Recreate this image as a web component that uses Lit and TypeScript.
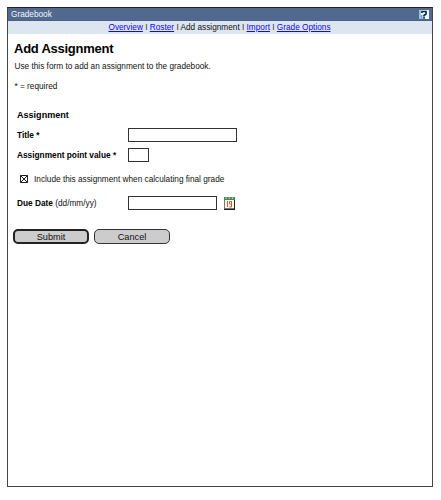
import { LitElement, html, css, svg } from "lit";
import { customElement } from "lit/decorators.js";

@customElement("app-root")
class AppRoot extends LitElement {
  static styles = css`
    * { box-sizing: border-box; }
    :host {
      display: block; box-sizing: border-box; width: 441px; height: 500px; padding: 7px 8px 13px 7px;
      background: #fff; color: #111; overflow: hidden;
      font-family: "Liberation Sans", Arial, sans-serif; font-size: 8.25px;
      white-space: nowrap;
    }
    .frame { height: 480px; border: 1px solid #444; border-top-color: #222; }
    .bar {
      height: 13px; padding: 0 3px; background: #51698f; color: #f4f6fa;
      display: flex; align-items: center; justify-content: space-between;
      line-height: 13px; border-bottom: 1px solid #486084;
    }
    .bar svg { display: block; width: 10px; height: 11px; }
    nav {
      height: 13px; background: #dde5f0; line-height: 13px; padding-right: 1px;
      text-align: center; font-size: 8.25px;
    }
    a { color: #0a0aff; text-decoration: underline; }
    .sep { color: #333; }
    .body { padding: 0 6px; display: flex; flex-direction: column; }
    h1 { margin: 6px 0 0; font-size: 13px; letter-spacing: -0.25px; line-height: 18px; color: #000; }
    p { margin: 0; padding-left: 0.5px; }
    .intro { margin-top: 2.5px; line-height: 12px; }
    .required { margin-top: 8px; line-height: 12px; }
    form { display: flex; flex-direction: column; margin-top: 16.5px; }
    h2 { margin: 0 0 0 3px; font-size: 9.05px; line-height: 12px; color: #000; }
    .row { display: flex; align-items: center; height: 14px; padding-left: 3px; }
    label { width: 111px; line-height: 12px; padding-top: 1px; }
    b { font-size: 8.3px; color: #000; }
    .title { margin-top: 7px; }
    .points { margin-top: 6px; }
    .include { margin-top: 10px; padding-left: 6px; }
    .include svg { width: 8px; height: 8px; margin-right: 6px; }
    .include label { width: auto; }
    .date { margin-top: 10px; }
    input {
      height: 14px; padding: 0 2px; margin: 0; border: 1px solid #333; border-radius: 0;
      outline: 0; background: #fff; font: inherit;
    }
    .w-title { width: 109px; }
    .w-points { width: 21px; }
    .w-date { width: 89px; }
    .calendar { width: 13px; height: 14px; margin-left: 6px; }
    .actions { display: flex; gap: 5px; margin-top: 19px; margin-left: -1px; }
    button {
      width: 76px; height: 15px; padding: 1px 0 0; border: 1px solid #333; border-radius: 5px;
      background: #ccc; color: #111; font: 9.2px/12px "Liberation Sans", Arial, sans-serif;
    }
    .primary { border: 2px solid #222; line-height: 10px; }
  `;

  private helpIcon = svg`<svg viewBox="0 0 10 11">
    <rect x="0" y="1" width="10" height="9" fill="#f0f5f8"/>
    <path d="M0 1h2v9H0z" fill="#9cc5e4"/>
    <path d="M3 4V2.5h4V5L5 6.5v1" fill="none" stroke="#132a4a" stroke-width="1.7"/>
    <rect x="4" y="8.2" width="2" height="1.5" fill="#132a4a"/>
    <path d="M2 6h1.5v4H2z" fill="#6fa6d0"/>
  </svg>`;

  private calendarIcon = svg`<svg class="calendar" viewBox="0 0 13 14">
    <rect x="1" y="1" width="11" height="13" fill="#222"/>
    <rect x="1" y="1" width="10" height="12" fill="#777"/>
    <rect x="2" y="4" width="9" height="8" fill="#fffbe6"/>
    <rect x="1" y="1" width="11" height="3" fill="#3f8a55"/>
    <path d="M2.5 1.5h1.2v1.2H2.5zM5.6 1.5h1.2v1.2H5.6zM8.8 1.5H10v1.2H8.8z" fill="#e4f2e4"/>
    <path d="M4.5 5V11M8.5 5.5h-2v2.5h2M8.5 5v6H6.3" fill="none" stroke="#cc5a50" stroke-width="1"/>
  </svg>`;

  render() {
    const sep = html` <span class="sep">I</span> `;
    return html`<div class="frame">
      <header class="bar"><span>Gradebook</span>${this.helpIcon}</header>
      <nav><a>Overview</a>${sep}<a>Roster</a>${sep}<span>Add assignment</span>${sep}<a>Import</a>${sep}<a>Grade Options</a></nav>
      <main class="body">
        <h1>Add Assignment</h1>
        <p class="intro">Use this form to add an assignment to the gradebook.</p>
        <p class="required">* = required</p>
        <form>
          <h2>Assignment</h2>
          <div class="row title"><label><b>Title *</b></label><input class="w-title"></div>
          <div class="row points"><label><b>Assignment point value *</b></label><input class="w-points"></div>
          <div class="row include">
            <svg viewBox="0 0 8 8"><path d="M.5.5h7v7h-7zl7 7M7.5.5l-7 7" fill="none" stroke="#222" stroke-width="1"/></svg>
            <label>Include this assignment when calculating final grade</label>
          </div>
          <div class="row date"><label><b>Due Date</b> (dd/mm/yy)</label><input class="w-date">${this.calendarIcon}</div>
          <div class="actions"><button class="primary" type="button">Submit</button><button type="button">Cancel</button></div>
        </form>
      </main>
    </div>`;
  }
}
